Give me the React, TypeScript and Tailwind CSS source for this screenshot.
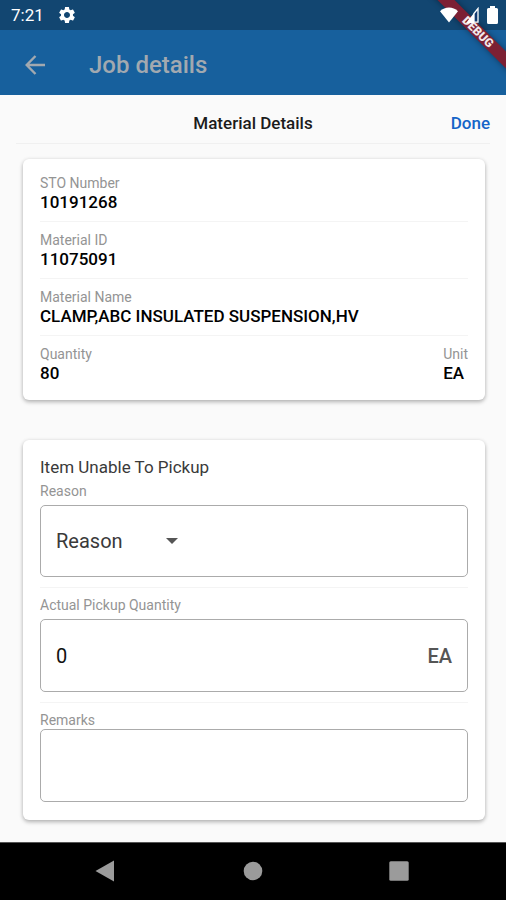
import type { ReactNode } from "react";

interface DetailProps {
  label: string;
  value: string;
}

function Detail({ label, value }: DetailProps) {
  return (
    <div>
      <dt className="text-[14px] leading-[18px] text-[#949494]">{label}</dt>
      <dd className="text-[17px] leading-5 font-medium text-black">{value}</dd>
    </div>
  );
}

function Card({ children }: { children: ReactNode }) {
  return (
    <section className="rounded-md bg-white px-[17px] shadow-[0_2px_4px_rgba(0,0,0,0.28),0_0_4px_rgba(0,0,0,0.06)]">
      {children}
    </section>
  );
}

function FieldLabel({ htmlFor, children }: { htmlFor: string; children: ReactNode }) {
  return (
    <label htmlFor={htmlFor} className="block text-[14px] leading-[18px] text-[#949494]">
      {children}
    </label>
  );
}

function StatusBar() {
  return (
    <div className="flex h-[30px] items-center justify-between bg-[#124671] pr-2 pl-[11px] text-white">
      <div className="flex items-center gap-[13px]">
        <span className="text-[17px] leading-5">7:21</span>
        {/* Settings */}
        <svg className="h-5 w-5" viewBox="0 0 24 24" fill="currentColor">
          <path d="M19.14 12.94c.04-.3.06-.61.06-.94 0-.32-.02-.64-.07-.94l2.03-1.58c.18-.14.23-.41.12-.61l-1.92-3.32c-.12-.22-.37-.29-.59-.22l-2.39.96c-.5-.38-1.03-.7-1.62-.94l-.36-2.54c-.04-.24-.24-.41-.48-.41h-3.84c-.24 0-.43.17-.47.41l-.36 2.54c-.59.24-1.13.57-1.62.94l-2.39-.96c-.22-.08-.47 0-.59.22L2.74 8.87c-.12.21-.08.47.12.61l2.03 1.58c-.05.3-.09.63-.09.94s.02.64.07.94l-2.03 1.58c-.18.14-.23.41-.12.61l1.92 3.32c.12.22.37.29.59.22l2.39-.96c.5.38 1.03.7 1.62.94l.36 2.54c.05.24.24.41.48.41h3.84c.24 0 .44-.17.47-.41l.36-2.54c.59-.24 1.13-.56 1.62-.94l2.39.96c.22.08.47 0 .59-.22l1.92-3.32c.12-.22.07-.47-.12-.61l-2.01-1.58zM12 15.6c-1.98 0-3.6-1.62-3.6-3.6s1.62-3.6 3.6-3.6 3.6 1.62 3.6 3.6-1.62 3.6-3.6 3.6z" />
        </svg>
      </div>
      <div className="relative z-10 flex items-center gap-2">
        {/* Wifi */}
        <svg className="h-4 w-[18px]" viewBox="0 0 18 16" fill="currentColor">
          <path d="M0 4.2C2.6 1.6 5.7.4 9 .4s6.400 1.200 9 3.800L9 15.600z" />
        </svg>
        {/* Signal */}
        <svg className="h-4 w-[13px]" viewBox="0 0 13 16">
          <path d="M8 6L0 16h8z" fill="currentColor" />
          <path d="M8 6.500L12 1.500V15.200H8z" fill="#123a70" stroke="currentColor" strokeWidth="1.300" />
        </svg>
        {/* Battery */}
        <svg className="h-[18px] w-[11px]" viewBox="0 0 11 18" fill="currentColor">
          <path d="M3 0h5v2h1.500A1.500 1.500 0 0 1 11 3.500v13A1.500 1.500 0 0 1 9.500 18h-8A1.500 1.500 0 0 1 0 16.500v-13A1.500 1.500 0 0 1 1.500 2H3z" />
        </svg>
      </div>
    </div>
  );
}

function DebugBanner() {
  return (
    <div className="pointer-events-none absolute top-0 right-0 h-20 w-20 overflow-hidden">
      <div className="absolute top-[26px] -right-8 w-[120px] rotate-45 bg-[#7c2034] text-center text-[12px] leading-3 font-black text-white/90 shadow-[0_0_6px_rgba(0,0,0,0.4)]">
        DEBUG
      </div>
    </div>
  );
}

function NavBar() {
  return (
    <nav className="grid h-[58px] grid-cols-[1fr_auto_1fr] items-center border-t border-[#555] bg-black pb-[2px] text-[#9b9b9b]">
      <button aria-label="Back" className="mr-[128px] justify-self-end">
        <svg className="h-[22px] w-5" viewBox="0 0 20 22" fill="currentColor">
          <path d="M19 .5v21L.5 11z" />
        </svg>
      </button>
      <button aria-label="Home">
        <svg className="h-5 w-5" viewBox="0 0 20 20" fill="currentColor">
          <circle cx="10" cy="10" r="9.300" />
        </svg>
      </button>
      <button aria-label="Recents" className="ml-[126px] justify-self-start">
        <svg className="h-5 w-5" viewBox="0 0 20 20" fill="currentColor">
          <rect x=".3" y=".3" width="19.400" height="19.400" rx="1.500" />
        </svg>
      </button>
    </nav>
  );
}

export default function App() {
  return (
    <div className="relative flex min-h-screen flex-col bg-[#fafafa] font-[Roboto,sans-serif]">
      <StatusBar />
      <header className="flex h-[65px] items-center gap-11 bg-[#17609d] pt-1 pl-[25px] text-[#a2a9b0]">
        <button aria-label="Go back">
          <svg className="h-5 w-5" viewBox="0 0 20 20" fill="none" stroke="currentColor" strokeWidth="2.400">
            <path d="M20 10H2M10.500 1L1.700 10l8.800 9" />
          </svg>
        </button>
        <h1 className="text-[24px] leading-8 font-medium">Job details</h1>
      </header>
      <DebugBanner />

      <main className="flex-1">
        <div className="mx-4 grid h-[49px] grid-cols-[1fr_auto_1fr] items-center border-b border-[#f0f0f0] pt-2">
          <h2 className="col-start-2 text-[17px] leading-5 font-medium text-[#1c1c1c]">Material Details</h2>
          <button className="justify-self-end text-[17px] leading-5 font-medium text-[#1565c8]">Done</button>
        </div>

        <div className="flex flex-col gap-10 pt-[15px] pr-[21px] pb-[22px] pl-[23px]">
          <Card>
            <dl className="divide-y divide-[#f4f4f4] pt-[15px] pb-[17px] *:py-[9px] *:first:pt-0 *:last:pb-0">
              <div>
                <Detail label="STO Number" value="10191268" />
              </div>
              <div>
                <Detail label="Material ID" value="11075091" />
              </div>
              <div>
                <Detail label="Material Name" value="CLAMP,ABC INSULATED SUSPENSION,HV" />
              </div>
              <div className="flex justify-between">
                <Detail label="Quantity" value="80" />
                <Detail label="Unit" value="EA" />
              </div>
            </dl>
          </Card>

          <Card>
            <form className="pt-4 pb-[18px]">
              <h3 className="mb-1 text-[17px] leading-[22px] text-[#3a3a3a]">Item Unable To Pickup</h3>

              <div className="border-b border-[#f4f4f4] pb-[10px]">
                <FieldLabel htmlFor="reason">Reason</FieldLabel>
                <div className="mt-[5px] flex h-[72px] items-center rounded-[5px] border border-[#ababab] px-[15px]">
                  <div className="relative flex w-[128px] items-center">
                    <select
                      id="reason"
                      className="h-6 w-full appearance-none bg-transparent text-[20px] leading-6 text-[#3a3a3a] outline-none"
                    >
                      <option>Reason</option>
                    </select>
                    <svg
                      className="pointer-events-none absolute right-[6px] h-[6px] w-3"
                      viewBox="0 0 12 6"
                      fill="#555"
                    >
                      <path d="M0 0h12L6 6z" />
                    </svg>
                  </div>
                </div>
              </div>

              <div className="border-b border-[#f4f4f4] pt-2 pb-[10px]">
                <FieldLabel htmlFor="quantity">Actual Pickup Quantity</FieldLabel>
                <div className="mt-[5px] flex h-[73px] items-center rounded-[5px] border border-[#ababab] px-[15px] text-[20px] leading-6">
                  <input
                    id="quantity"
                    type="text"
                    inputMode="numeric"
                    defaultValue="0"
                    className="min-w-0 flex-1 text-[#111] outline-none"
                  />
                  <span className="font-medium text-[#555]">EA</span>
                </div>
              </div>

              <div className="pt-2">
                <FieldLabel htmlFor="remarks">Remarks</FieldLabel>
                <textarea
                  id="remarks"
                  className="block h-[73px] w-full resize-none rounded-[5px] border border-[#ababab] px-[15px] py-6 text-[20px] leading-6 outline-none"
                />
              </div>
            </form>
          </Card>
        </div>
      </main>

      <NavBar />
    </div>
  );
}
